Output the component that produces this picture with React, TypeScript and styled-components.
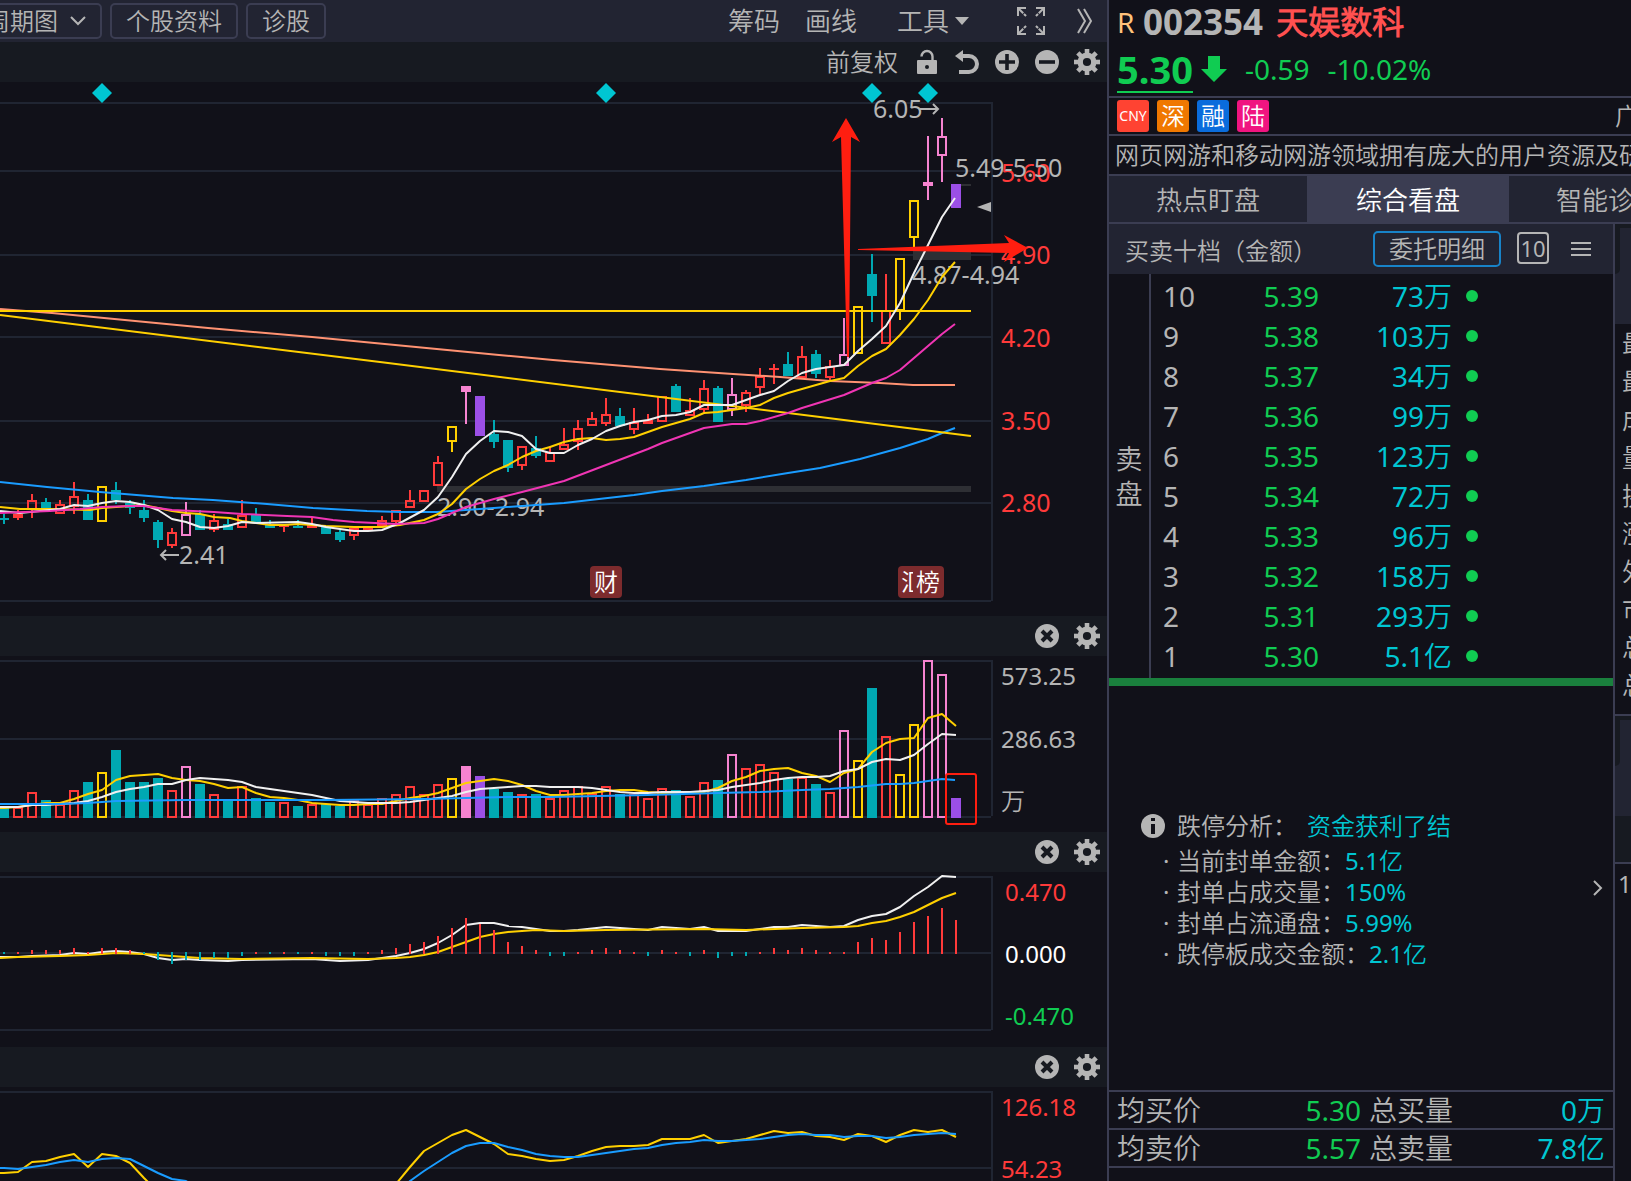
import React from "react";
import styled, { createGlobalStyle } from "styled-components";

const C = {
  bg: "#111119",
  bar: "#222432",
  strip: "#171a21",
  line: "#3b3d52",
  grid: "#202532",
  text: "#b5b5b5",
  red: "#ff3a3a",
  green: "#10cc52",
  cyan: "#00c6d2",
  teal: "#00a8b2",
  yellow: "#ffd000",
  pink: "#f683d0",
  purple: "#9b4fe6",
  white: "#f0f0f0",
  magenta: "#f035b4",
  blue: "#1a9cff",
  salmon: "#ff9272",
  mark: "#ff1e10",
};

const FONT = `"Noto Sans", "Noto Sans CJK SC DemiLight", "Noto Sans CJK SC", sans-serif`;

const Global = createGlobalStyle`
  * { box-sizing: border-box; }
  body { margin: 0; background: ${C.bg}; overflow: hidden; }
  button { font: inherit; color: inherit; background: none; border: 0; padding: 0; margin: 0; cursor: pointer; }
  button svg { display: block; }
  h1, p, ul, dl, dd, dt { margin: 0; padding: 0; font-weight: inherit; font-size: inherit; }
`;

const Shell = styled.div`
  display: grid;
  grid-template-columns: minmax(0, 1fr) 524px;
  height: 100vh;
  overflow: hidden;
  background: ${C.bg};
  color: ${C.text};
  font-family: ${FONT};
  font-weight: 400;
  font-size: 24px;
`;

const ChartColumn = styled.main`
  display: flex;
  flex-direction: column;
  min-width: 0;
  overflow: hidden;
`;

const Toolbar = styled.header`
  display: flex;
  align-items: center;
  justify-content: space-between;
  flex: none;
  height: 42px;
  background: ${C.bar};
`;

const Group = styled.div`
  display: flex;
  align-items: center;
  gap: 8px;
`;

const BoxButton = styled.button<{ $clipped?: boolean }>`
  display: flex;
  align-items: center;
  gap: 12px;
  height: 36px;
  padding: 0 14px;
  margin-left: ${(p) => (p.$clipped ? "-30px" : "0")};
  border: 2px solid ${C.line};
  border-radius: 5px;
  line-height: 32px;
  white-space: nowrap;
`;

const Tools = styled.div`
  display: flex;
  align-items: center;
  padding-right: 15px;
  font-size: 26px;
  line-height: 38px;
`;

const Tool = styled.button<{ $gap?: number }>`
  display: flex;
  align-items: center;
  gap: 6px;
  margin-left: ${(p) => p.$gap ?? 0}px;
`;

const Strip = styled.div`
  display: flex;
  align-items: center;
  justify-content: flex-end;
  flex: none;
  height: 40px;
  background: ${C.strip};
`;

const StripText = styled.button`
  margin-right: 9px;
  line-height: 36px;
`;

const IconButton = styled.button`
  width: 40px;
  height: 40px;
`;

const Plot = styled.svg<{ $h: number }>`
  display: block;
  flex: none;
  width: 100%;
  height: ${(p) => p.$h}px;
  font-family: ${FONT};
  font-weight: 400;
`;

const Side = styled.aside`
  display: flex;
  flex-direction: column;
  min-width: 0;
  overflow: hidden;
  border-left: 2px solid ${C.line};
`;

const Quote = styled.section`
  flex: none;
  height: 98px;
  padding: 0 8px;
  border-bottom: 2px solid ${C.line};
`;

const NameRow = styled.h1`
  display: flex;
  align-items: center;
  height: 44px;
  line-height: 44px;
  white-space: nowrap;
`;

const Flag = styled.span`
  width: 26px;
  color: #ffc27a;
  font-size: 28px;
`;

const Code = styled.span`
  margin-right: 13px;
  font-size: 35px;
  font-weight: 700;
`;

const Name = styled.span`
  color: #ff5050;
  font-size: 32px;
  font-weight: 700;
`;

const PriceRow = styled.div`
  display: flex;
  align-items: center;
  height: 50px;
  color: ${C.green};
  font-size: 28px;
  line-height: 44px;
`;

const Price = styled.span`
  height: 47px;
  border-bottom: 2px solid ${C.green};
  font-size: 38px;
  font-weight: 700;
  line-height: 47px;
`;

const Change = styled.span`
  margin-left: 18px;
`;

const TagRow = styled.div`
  display: flex;
  align-items: center;
  gap: 8px;
  flex: none;
  height: 38px;
  padding-left: 8px;
  border-bottom: 2px solid ${C.line};
`;

const Tag = styled.span<{ $bg: string; $latin?: boolean }>`
  width: 32px;
  height: 32px;
  border-radius: 3px;
  background: ${(p) => p.$bg};
  color: #fff;
  font-size: ${(p) => (p.$latin ? 14 : 24)}px;
  line-height: 32px;
  text-align: center;
`;

const Region = styled.span`
  margin-left: auto;
  margin-right: -8px;
  line-height: 36px;
`;

const News = styled.p`
  flex: none;
  height: 40px;
  padding-left: 6px !important;
  border-bottom: 2px solid ${C.line};
  line-height: 38px;
  white-space: nowrap;
  overflow: hidden;
`;

const Tabs = styled.nav`
  display: flex;
  flex: none;
  height: 48px;
  margin-left: -2px;
  border-bottom: 2px solid ${C.line};
`;

const Tab = styled.button<{ $on?: boolean }>`
  flex: 0 0 200px;
  padding-top: 2px;
  border-left: 2px solid ${C.line};
  background: ${(p) => (p.$on ? C.line : C.bar)};
  color: ${(p) => (p.$on ? "#fff" : C.text)};
  font-size: 26px;
  line-height: 44px;
`;

const Body = styled.div`
  display: flex;
  flex: 1;
  min-height: 0;
`;

const Depth = styled.section`
  display: flex;
  flex-direction: column;
  flex: 1;
  min-width: 0;
`;

const DepthHead = styled.div`
  display: flex;
  align-items: center;
  flex: none;
  height: 50px;
  padding: 0 22px 0 16px;
  background: ${C.bar};
`;

const DetailButton = styled.button`
  width: 128px;
  height: 36px;
  margin-left: auto;
  border: 2px solid #1883c8;
  border-radius: 5px;
  line-height: 32px;
`;

const TenButton = styled.button`
  width: 32px;
  height: 32px;
  margin: 0 22px 2px 16px;
  border: 2px solid ${C.text};
  border-radius: 4px;
  font-size: 22px;
  line-height: 26px;
`;

const Orders = styled.div`
  display: flex;
  flex: none;
  border-bottom: 8px solid #1a803d;
`;

const SellLabel = styled.div`
  display: flex;
  align-items: center;
  justify-content: center;
  width: 42px;
  border-right: 2px solid ${C.line};
  font-size: 27px;
  line-height: 35px;
  text-align: center;
  span { width: 28px; }
`;

const OrderTable = styled.table`
  flex: 1;
  margin: 2px 0;
  border-spacing: 0;
  table-layout: fixed;
  font-size: 28px;
  line-height: 38px;
  td, th { height: 40px; padding: 0; font-weight: 400; }
`;

const Level = styled.th`
  width: 72px;
  text-align: left;
  div { padding-left: 12px; }
`;

const Num = styled.td<{ $w: number; $color: string }>`
  width: ${(p) => p.$w}px;
  color: ${(p) => p.$color};
  text-align: right;
`;

const DotCell = styled.td`
  padding-left: 14px !important;
`;

const Dot = styled.div`
  width: 12px;
  height: 12px;
  border-radius: 50%;
  background: ${C.green};
`;

const Analysis = styled.section`
  display: flex;
  align-items: center;
  flex: none;
  height: 404px;
  padding: 0 10px 0 32px;
`;

const Reason = styled.div`
  display: grid;
  grid-template-columns: 36px auto;
  row-gap: 1px;
  margin-right: auto;
  white-space: nowrap;
`;

const ReasonTitle = styled.p`
  line-height: 36px;
`;

const Facts = styled.ul`
  grid-column: 2;
  list-style: none;
  line-height: 31px;
  li::before {
    content: "·";
    display: inline-block;
    width: 14px;
    margin-left: -14px;
  }
`;

const Value = styled.span<{ $gap?: boolean }>`
  margin-left: ${(p) => (p.$gap ? 10 : 0)}px;
  color: ${C.cyan};
`;

const Totals = styled.dl`
  display: grid;
  grid-template-columns: 84px 160px 84px 1fr;
  flex: none;
  height: 38px;
  padding: 0 8px !important;
  border-top: 2px solid ${C.line};
  font-size: 28px;
  line-height: 36px;
  dt { white-space: nowrap; }
  dt:nth-of-type(2) { padding-left: 8px; }
`;

const Total = styled.dd<{ $color: string }>`
  color: ${(p) => p.$color};
  text-align: right;
`;

const Foot = styled.div`
  flex: 1;
  border-top: 2px solid ${C.line};
`;

const Edge = styled.section`
  display: flex;
  flex-direction: column;
  flex: none;
  width: 18px;
  border-left: 2px solid ${C.line};
  overflow: hidden;
`;

const EdgeTab = styled.div`
  flex: none;
  height: 100px;
  border-top: 4px solid ${C.strip};
  background: ${C.bar};
  div {
    width: 5px;
    height: 46px;
    border-radius: 0 0 6px 0;
    background: ${C.strip};
  }
`;

const EdgeList = styled.ul`
  flex: none;
  height: 392px;
  padding-left: 7px !important;
  border-bottom: 2px solid ${C.line};
  list-style: none;
  font-size: 25px;
  line-height: 38px;
  white-space: nowrap;
`;

const EdgeStrip = styled.div`
  flex: none;
  height: 48px;
  border-bottom: 2px solid ${C.line};
  background: ${C.strip};
`;

const EdgeNum = styled.p`
  padding-left: 3px !important;
  line-height: 40px;
`;

const Gear = () => (
  <svg width="40" height="40" viewBox="-20 -20 40 40" stroke={C.text} fill="none">
    <circle r="6.8" strokeWidth="5.4" />
    {[0, 45, 90, 135, 180, 225, 270, 315].map((a) => (
      <path key={a} d="M0 -8V-13" strokeWidth="4.6" transform={`rotate(${a})`} />
    ))}
  </svg>
);

const Round = ({ d, w = 3.6 }: { d: string; w?: number }) => (
  <svg width="40" height="40" viewBox="-20 -20 40 40">
    <circle r="12" fill={C.text} />
    <path d={d} stroke={C.strip} strokeWidth={w} />
  </svg>
);

const PanelStrip = () => (
  <Strip>
    <IconButton aria-label="关闭"><Round d="M-5 -5L5 5M5 -5L-5 5" w={4} /></IconButton>
    <IconButton aria-label="设置"><Gear /></IconButton>
  </Strip>
);

const STEP = 14;
const at = (i: number) => 4 + i * STEP;

type Kind = "r" | "t" | "y" | "k" | "K" | "p";
const tone: Record<Kind, string> = { r: C.red, t: C.teal, y: C.yellow, k: C.pink, K: C.pink, p: C.purple };
const hollow = (k: Kind) => k === "r" || k === "y" || k === "k";

// kind, high, body top, body bottom, low
const candles: [Kind, number, number, number, number][] = [
  ["t",514,518,520,524],["r",510,514,518,520],["r",494,500,510,518],["t",498,502,509,509],["r",500,504,514,514],
  ["r",482,496,507,514],["t",494,500,520,520],["y",486,486,522,522],["t",482,490,500,504],["t",500,503,508,514],
  ["t",500,510,518,522],["t",520,522,540,548],["r",528,532,546,548],["k",502,514,536,536],["t",510,514,530,530],
  ["r",514,520,530,532],["t",519,524,530,530],["r",500,515,528,528],["t",508,515,522,522],["t",520,525,528,528],
  ["r",524,524,527,532],["t",520,526,528,528],["r",518,524,528,528],["t",527,527,534,534],["t",530,532,540,542],
  ["r",528,528,536,540],["r",526,526,530,530],["r",516,520,526,526],["r",510,510,522,524],["r",490,500,508,508],
  ["r",490,490,502,502],["r",456,462,486,486],["y",426,426,442,452],["K",386,386,392,424],["p",396,396,436,436],
  ["t",420,434,442,448],["t",440,440,468,472],["r",446,446,466,470],["t",436,448,456,458],["r",446,452,462,462],
  ["r",428,444,450,450],["r",420,428,442,450],["r",412,418,426,426],["r",398,414,424,426],["t",408,416,426,426],
  ["r",408,422,430,434],["r",414,420,424,424],["r",396,396,422,422],["t",384,386,412,412],["r",398,410,416,416],
  ["r",380,388,410,412],["t",386,388,422,422],["k",378,394,410,416],["r",390,392,406,412],["r",368,376,388,394],
  ["r",364,368,370,384],["t",352,364,376,376],["r",346,356,378,378],["t",350,354,374,378],["r",360,366,378,380],
  ["k",318,354,366,366],["y",306,306,354,354],["t",254,274,296,322],["r",274,310,344,344],["y",258,258,311,320],
  ["y",200,200,238,248],["k",136,182,186,200],["k",118,136,156,182],["p",184,184,208,208],
];

const volumeTops = [
  807,807,792,800,804,790,782,772,750,782,782,778,790,766,784,794,800,786,798,802,802,806,804,804,806,
  800,804,798,794,786,794,784,778,766,776,789,792,794,794,798,790,786,793,786,794,794,798,788,790,796,
  782,780,754,768,764,772,779,777,784,792,730,760,688,736,774,724,660,674,798,
];

const histogram = [
  -2,2,4,4,4,6,2,6,6,4,-2,-8,-12,-8,-8,-6,-6,-4,2,-2,2,-2,2,-4,-4,-4,2,4,6,10,12,18,26,36,30,24,12,8,4,
  -4,-4,2,4,6,4,2,-4,4,2,-4,4,-6,-4,-4,2,6,4,6,4,2,2,12,16,14,22,32,38,46,34,
];

const volFast = [
  808,807,805,803,803,799,794,790,780,776,775,774,778,780,781,784,788,787,793,797,798,800,803,804,805,805,
  804,804,801,798,796,793,788,783,781,779,781,785,791,795,795,794,793,791,790,790,792,793,793,792,792,788,
  781,777,771,769,768,773,776,782,773,769,752,743,739,738,718,714,726,
];
const volSlow = [
  807,807,805,805,804,803,801,797,792,789,787,784,784,780,778,779,780,782,787,789,791,793,795,798,801,802,
  803,803,803,802,800,798,796,792,789,788,787,786,786,787,787,787,788,790,792,793,793,792,792,792,791,790,
  787,785,783,780,778,777,777,776,771,769,762,759,760,755,744,734,735,
];

const kFast = [
  1173,1172,1162,1161,1157,1154,1167,1154,1156,1163,1178,1192,1210,1220,1225,1230,1230,1230,1230,1230,1230,
  1230,1230,1230,1230,1225,1215,1200,1184,1167,1151,1143,1135,1130,1137,1144,1154,1156,1159,1161,1160,1156,
  1151,1147,1146,1146,1145,1139,1139,1139,1135,1143,1141,1139,1135,1131,1133,1132,1136,1137,1140,1134,1136,
  1142,1135,1130,1132,1130,1137,
];
const kSlow = [
  1168,1169,1167,1165,1162,1160,1162,1159,1158,1159,1166,1173,1179,1181,1190,1200,1210,1220,1225,1230,1230,
  1230,1230,1230,1230,1225,1215,1205,1195,1181,1171,1162,1153,1146,1143,1143,1147,1150,1154,1156,1157,1157,
  1155,1153,1151,1149,1148,1145,1143,1142,1140,1141,1141,1140,1139,1137,1135,1134,1135,1135,1137,1136,1136,
  1138,1137,1135,1134,1133,1134,
];

const series = (ys: number[]) => `0,${ys[0]} ` + ys.map((y, i) => `${at(i)},${y}`).join(" ");

const ma5 = "0,511 20,513 60,509 74,505 88,506 102,503 116,501 130,502 144,505 158,510 172,519 186,522 200,527 214,528 228,526 242,522 256,523 298,522 312,524 326,527 340,529 354,531 368,531 382,530 400,523 424,510 438,497 452,477 466,454 480,441 494,431 508,432 522,436 536,449 550,453 564,453 578,445 592,439 606,431 620,426 634,422 648,420 662,416 676,415 690,412 704,405 732,405 746,400 760,395 774,391 788,381 802,373 816,369 844,365 858,351 872,339 886,326 900,303 914,273 928,245 942,217 955,198";
const ma10 = "0,507 20,509 50,509 90,510 102,508 130,506 143,505 158,508 172,511 186,513 200,514 214,517 230,518 242,521 256,523 270,525 284,525 298,524 326,526 354,527 382,527 400,525 424,520 438,514 452,504 466,489 480,479 494,471 508,465 522,457 536,451 550,447 564,442 578,439 592,438 606,440 620,439 634,437 648,432 662,427 676,423 690,419 704,413 718,412 746,408 760,405 774,398 788,393 802,389 830,381 844,378 858,366 872,356 886,349 900,335 914,319 928,300 942,277 955,262";
const ma20 = "0,513 50,511 80,509 102,507 130,506 143,506 158,508 172,510 214,512 242,514 287,516 312,517 333,520 354,522 396,524 424,523 438,519 452,513 466,507 494,499 522,492 564,481 606,465 648,449 662,443 704,428 732,424 746,424 760,421 788,413 802,408 844,395 872,383 886,378 900,370 914,358 928,346 942,334 955,324";
const ma60 = "0,482 47,487 100,492 173,498 213,500 267,504 313,508 367,511 400,512 437,512 494,508 564,503 634,495 662,491 704,486 746,480 788,473 820,468 860,459 900,448 928,439 942,433 955,428";
const ma120 = "0,309 52,313 104,318 208,328 312,337 416,347 499,355 553,360 660,369 733,374 780,377 830,381 880,383 913,385 955,385";
const volBase = "0,804 60,804 88,803 116,801 186,800 326,800 424,799 508,797 550,797 648,795 718,793 760,792 802,790 830,789 858,787 886,784 900,784 914,783 928,781 942,779 955,780";
const dif = "0,957 18,957 32,956 60,955 74,953 88,954 102,952 116,951 130,952 144,954 158,958 172,960 186,959 200,960 228,961 242,960 312,959 340,961 368,960 382,958 396,956 410,953 424,949 438,943 452,935 466,925 480,923 494,923 508,926 522,927 536,929 550,931 564,931 578,930 606,927 648,930 662,927 676,928 690,929 704,927 718,931 746,931 760,929 774,927 788,927 802,925 816,926 830,927 844,926 858,920 872,916 886,914 900,907 914,896 928,887 942,876 956,877";
const dea = "0,958 18,957 60,956 88,955 116,953 144,954 172,956 200,958 242,959 312,958 368,959 396,958 410,957 424,955 438,952 452,947 466,942 480,937 494,934 508,932 522,931 536,930 564,931 606,930 704,929 746,930 802,928 844,927 858,926 872,923 886,921 900,917 914,912 928,905 942,898 956,893";

const Curve = ({ points, color }: { points: string; color: string }) => (
  <polyline points={points} stroke={color} strokeWidth="2" fill="none" strokeLinejoin="round" />
);

const Grid = ({ rows, top, bottom }: { rows: number[]; top: number; bottom: number }) => (
  <path d={rows.map((y) => `M0 ${y}H991`).join("") + `M992 ${top - 1}V${bottom}`} stroke={C.grid} strokeWidth="2" fill="none" />
);

const Candle = ({ i }: { i: number }) => {
  const [k, hi, top, bot, lo] = candles[i];
  const x = at(i);
  const open = hollow(k) && bot - top > 4;
  return (
    <g fill={tone[k]}>
      {hi < top && <rect x={x - 1} y={hi} width="2" height={top - hi} />}
      {lo > bot && <rect x={x - 1} y={bot} width="2" height={lo - bot} />}
      {open ? (
        <rect x={x - 4} y={top + 1} width="8" height={bot - top - 2} fill="none" stroke={tone[k]} strokeWidth="2" />
      ) : (
        <rect x={x - 5} y={top} width="10" height={bot - top} />
      )}
    </g>
  );
};

const PriceChart = () => (
  <Plot $h={534} viewBox="0 82 1107 534" preserveAspectRatio="xMaxYMin meet" role="img" aria-label="日K线">
    <Grid rows={[103, 171, 255, 337, 421, 503, 601]} top={103} bottom={601} />
    <g fill="#2e2f34">
      <rect x="437" y="486" width="534" height="6" />
      <rect x="913" y="248" width="58" height="12" />
      <rect x="956" y="184" width="15" height="2" />
    </g>
    {candles.map((_, i) => <Candle key={i} i={i} />)}
    <g fill={C.red} fontSize="25">
      <text x="1001" y="182">5.60</text>
      <text x="1001" y="264">4.90</text>
      <text x="1001" y="347">4.20</text>
      <text x="1001" y="430">3.50</text>
      <text x="1001" y="512">2.80</text>
    </g>
    <g fill={C.text} fontSize="25">
      <text x="873" y="118">6.05</text>
      <text x="955" y="177">5.49-5.50</text>
      <text x="912" y="284">4.87-4.94</text>
      <text x="437" y="516">2.90-2.94</text>
      <text x="179" y="564">2.41</text>
    </g>
    <g fill="none" stroke={C.text} strokeWidth="2">
      <path d="M920 109H938M933 104L938 109L933 114" />
      <path d="M179 555H161M166 550L161 555L166 560" />
    </g>
    <Curve points={ma120} color={C.salmon} />
    <Curve points={ma60} color={C.blue} />
    <Curve points="0,311 971,311" color={C.yellow} />
    <Curve points="0,315 380,362 820,417 971,436" color={C.yellow} />
    <Curve points={ma10} color={C.yellow} />
    <Curve points={ma5} color={C.white} />
    <Curve points={ma20} color={C.magenta} />
    {[102, 606, 872, 928].map((x) => (
      <path key={x} d={`M${x} 83L${x + 10} 93L${x} 103L${x - 10} 93Z`} fill="#00c6d2" />
    ))}
    <path d="M977 207L991 202V212Z" fill={C.text} />
    <g fill="#7d2b2d">
      <rect x="590" y="566" width="32" height="32" rx="4" />
      <rect x="898" y="566" width="46" height="32" rx="4" />
    </g>
    <clipPath id="half"><rect x="900" y="566" width="13" height="32" /></clipPath>
    <g fill="#fff" fontSize="24">
      <text x="594" y="591">财</text>
      <text x="901" y="591" clipPath="url(#half)">汇</text>
      <text x="916" y="591">榜</text>
    </g>
    <g fill={C.mark}>
      <path d="M846 118L860 142L851 137L849 357H847L841 137L832 142Z" />
      <path d="M1028 248L1004 262L1009 253L858 250V249L1009 243L1004 235Z" />
    </g>
  </Plot>
);

const VolumeChart = () => (
  <Plot $h={176} viewBox="0 656 1107 176" preserveAspectRatio="xMaxYMin meet" role="img" aria-label="成交量">
    <Grid rows={[661, 739, 817]} top={661} bottom={816} />
    {volumeTops.map((y, i) => {
      const k = candles[i][0];
      return hollow(k) ? (
        <rect key={i} x={at(i) - 4} y={y + 1} width="8" height={816 - y} fill="none" stroke={tone[k]} strokeWidth="2" />
      ) : (
        <rect key={i} x={at(i) - 5} y={y} width="10" height={818 - y} fill={tone[k]} />
      );
    })}
    <Curve points={series(volFast)} color={C.yellow} />
    <Curve points={series(volSlow)} color={C.white} />
    <Curve points={volBase} color={C.blue} />
    <rect x="946" y="774" width="30" height="50" rx="2" fill="none" stroke={C.mark} strokeWidth="2" />
    <g fill={C.text} fontSize="24">
      <text x="1001" y="685">573.25</text>
      <text x="1001" y="748">286.63</text>
      <text x="1001" y="810">万</text>
    </g>
  </Plot>
);

const MacdChart = () => (
  <Plot $h={175} viewBox="0 872 1107 175" preserveAspectRatio="xMaxYMin meet" role="img" aria-label="MACD">
    <Grid rows={[877, 953, 1030]} top={877} bottom={1030} />
    <Curve points={dif} color={C.white} />
    <Curve points={dea} color={C.yellow} />
    {histogram.map((v, i) => (
      <rect key={i} x={at(i) - 1} y={v > 0 ? 954 - v : 952} width="2" height={Math.abs(v)} fill={v > 0 ? C.red : C.teal} />
    ))}
    <g fontSize="24">
      <text x="1005" y="901" fill={C.red}>0.470</text>
      <text x="1005" y="963" fill="#fff">0.000</text>
      <text x="1005" y="1025" fill={C.green}>-0.470</text>
    </g>
  </Plot>
);

const KdjChart = () => (
  <Plot $h={94} viewBox="0 1087 1107 94" preserveAspectRatio="xMaxYMin meet" role="img" aria-label="KDJ">
    <Grid rows={[1092, 1168]} top={1092} bottom={1181} />
    <Curve points={series(kFast)} color={C.yellow} />
    <Curve points={series(kSlow)} color={C.blue} />
    <g fontSize="24" fill={C.red}>
      <text x="1001" y="1116">126.18</text>
      <text x="1001" y="1178">54.23</text>
    </g>
  </Plot>
);

const orders: [string, string, string][] = [
  ["10", "5.39", "73万"], ["9", "5.38", "103万"], ["8", "5.37", "34万"], ["7", "5.36", "99万"], ["6", "5.35", "123万"],
  ["5", "5.34", "72万"], ["4", "5.33", "96万"], ["3", "5.32", "158万"], ["2", "5.31", "293万"], ["1", "5.30", "5.1亿"],
];

const facts: [string, string][] = [
  ["当前封单金额：", "5.1亿"], ["封单占成交量：", "150%"], ["封单占流通盘：", "5.99%"], ["跌停板成交金额：", "2.1亿"],
];

export default function App() {
  return (
    <Shell>
      <Global />
      <ChartColumn>
        <Toolbar>
          <Group>
            <BoxButton $clipped>
              周期图
              <svg width="16" height="10" fill="none" stroke={C.text} strokeWidth="2"><path d="M1 1L8 8L15 1" /></svg>
            </BoxButton>
            <BoxButton>个股资料</BoxButton>
            <BoxButton>诊股</BoxButton>
          </Group>
          <Tools>
            <Tool>筹码</Tool>
            <Tool $gap={25}>画线</Tool>
            <Tool $gap={40}>
              工具
              <svg width="14" height="8" fill={C.text}><path d="M0 0H14L7 8Z" /></svg>
            </Tool>
            <Tool $gap={48} aria-label="全屏">
              <svg width="28" height="28" fill="none" stroke={C.text} strokeWidth="2">
                <path d="M1 9V1H9M19 1H27V9M27 19V27H19M9 27H1V19" />
                <path d="M2 2L10 10M26 2L18 10M26 26L18 18M2 26L10 18" strokeDasharray="6 1 3 9" />
              </svg>
            </Tool>
            <Tool $gap={32} aria-label="更多">
              <svg width="15" height="26" fill="none" stroke={C.text} strokeWidth="2">
                <path d="M1 1L8 13L1 25M7 1L14 13L7 25" />
              </svg>
            </Tool>
          </Tools>
        </Toolbar>
        <Strip>
          <StripText>前复权</StripText>
          <IconButton aria-label="解锁">
            <svg width="40" height="40">
              <path d="M25.5 19V14.5a5.5 5.5 0 0 0-11 0" fill="none" stroke={C.text} strokeWidth="2.4" />
              <rect x="10" y="18" width="20" height="14" rx="1" fill={C.text} />
              <circle cx="20" cy="25" r="2" fill={C.strip} />
            </svg>
          </IconButton>
          <IconButton aria-label="撤销">
            <svg width="40" height="40">
              <path d="M14 14H22A8 8 0 0 1 22 30H12" fill="none" stroke={C.text} strokeWidth="4" />
              <path d="M8 14L16 8V20Z" fill={C.text} />
            </svg>
          </IconButton>
          <IconButton aria-label="放大"><Round d="M-8 0H8M0 -8V8" /></IconButton>
          <IconButton aria-label="缩小"><Round d="M-8 0H8" /></IconButton>
          <IconButton aria-label="设置"><Gear /></IconButton>
        </Strip>
        <PriceChart />
        <PanelStrip />
        <VolumeChart />
        <PanelStrip />
        <MacdChart />
        <PanelStrip />
        <KdjChart />
      </ChartColumn>

      <Side>
        <Quote>
          <NameRow>
            <Flag>R</Flag>
            <Code>002354</Code>
            <Name>天娱数科</Name>
          </NameRow>
          <PriceRow>
            <Price>5.30</Price>
            <svg width="34" height="26" fill={C.green}><path d="M15 0H27V13H34L21 26L8 13H15Z" /></svg>
            <Change>-0.59</Change>
            <Change>-10.02%</Change>
          </PriceRow>
        </Quote>
        <TagRow>
          <Tag $bg="#ff4332" $latin>CNY</Tag>
          <Tag $bg="#f07800">深</Tag>
          <Tag $bg="#0a6cdc">融</Tag>
          <Tag $bg="#f01480">陆</Tag>
          <Region>广</Region>
        </TagRow>
        <News>网页网游和移动网游领域拥有庞大的用户资源及研发</News>
        <Tabs>
          <Tab>热点盯盘</Tab>
          <Tab $on>综合看盘</Tab>
          <Tab>智能诊股</Tab>
        </Tabs>
        <Body>
          <Depth>
            <DepthHead>
              买卖十档（金额）
              <DetailButton>委托明细</DetailButton>
              <TenButton>10</TenButton>
              <button aria-label="菜单">
                <svg width="20" height="16" stroke={C.text} strokeWidth="2"><path d="M0 2H20M0 8H20M0 14H20" /></svg>
              </button>
            </DepthHead>
            <Orders>
              <SellLabel><span>卖盘</span></SellLabel>
              <OrderTable>
                <tbody>
                  {orders.map(([n, price, amount]) => (
                    <tr key={n}>
                      <Level scope="row"><div>{n}</div></Level>
                      <Num $w={96} $color={C.green}>{price}</Num>
                      <Num $w={133} $color={C.cyan}>{amount}</Num>
                      <DotCell><Dot /></DotCell>
                    </tr>
                  ))}
                </tbody>
              </OrderTable>
            </Orders>
            <Analysis>
              <Reason>
                <svg width="24" height="36">
                  <circle cx="12" cy="18" r="12" fill={C.text} />
                  <path d="M10 10H14V13H10ZM10 16H14V26H10Z" fill={C.bg} />
                </svg>
                <ReasonTitle>跌停分析：<Value $gap>资金获利了结</Value></ReasonTitle>
                <Facts>
                  {facts.map(([label, v]) => (
                    <li key={label}>{label}<Value>{v}</Value></li>
                  ))}
                </Facts>
              </Reason>
              <button aria-label="下一页">
                <svg width="10" height="16" fill="none" stroke={C.text} strokeWidth="2"><path d="M1 1L8 8L1 15" /></svg>
              </button>
            </Analysis>
            <Totals>
              <dt>均买价</dt><Total $color={C.green}>5.30</Total>
              <dt>总买量</dt><Total $color={C.cyan}>0万</Total>
            </Totals>
            <Totals>
              <dt>均卖价</dt><Total $color={C.green}>5.57</Total>
              <dt>总卖量</dt><Total $color={C.cyan}>7.8亿</Total>
            </Totals>
            <Foot />
          </Depth>
          <Edge>
            <EdgeTab><div /></EdgeTab>
            <EdgeList>
              {["最", "最", "成", "量", "换", "涨", "外", "市", "总", "总"].map((t, i) => <li key={i}>{t}</li>)}
            </EdgeList>
            <EdgeTab><div /></EdgeTab>
            <EdgeStrip />
            <EdgeNum>1</EdgeNum>
          </Edge>
        </Body>
      </Side>
    </Shell>
  );
}
